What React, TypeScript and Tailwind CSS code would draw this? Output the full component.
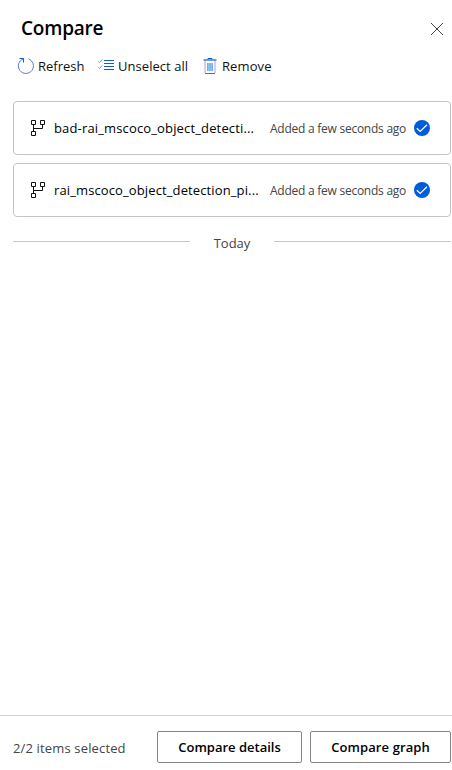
import type { ReactNode } from "react";

function RefreshIcon() {
  return (
    <svg width="18" height="18" viewBox="0 0 18 18" fill="none" stroke="#2f66d0" strokeWidth="1">
      <path d="M11.5 1.9A7.5 7.5 0 1 1 6.3 1.9" stroke="#5578d0" />
      <path d="M2.5 1.5H6.5V5.5" stroke="#0f5bd0" />
    </svg>
  );
}

function UnselectIcon() {
  return (
    <svg width="17" height="14" viewBox="0 0 17 14" fill="none">
      <path d="M6 1.5H16M6 4.5H16M6 7.5H16M6 10.5H16" stroke="#0f5bd0" />
      <path d="M0.3 2.3L1.6 3.5L4.2 0.5M0.3 8.3L1.6 9.5L4.2 6.5" stroke="#7d86cf" strokeWidth="0.9" />
    </svg>
  );
}

function TrashIcon() {
  return (
    <svg width="14" height="16" viewBox="0 0 14 16" fill="none">
      <path d="M5 1.5V0.5H9V1.5" stroke="#0f5bd0" />
      <path d="M2 2.5V15M12 2.5V15" stroke="#a5a4dc" />
      <path d="M0.5 2H13.5" stroke="#0f5bd0" strokeWidth="1.2" />
      <path d="M2 15.5H12" stroke="#3d6fd2" />
      <rect x="4" y="5" width="6" height="8" fill="#8cc4f2" />
      <path d="M4.5 5V13M7 5V13M9.5 5V13" stroke="#74aeea" />
    </svg>
  );
}

function PipelineIcon() {
  return (
    <svg width="16" height="16" viewBox="0 0 16 16" fill="none" stroke="#111" strokeWidth="1">
      <path d="M1.5 0.5H5.5V4.5H1.5ZM10.5 0.5H14.5V4.5H10.5ZM1.5 11.5H5.5V15.5H1.5Z" />
      <path d="M3.5 4.5V11.5M3.5 8.5H12.5V4.5" />
    </svg>
  );
}

function SelectedIcon() {
  return (
    <svg width="16" height="16" viewBox="0 0 16 16" fill="none">
      <circle cx="8" cy="8" r="8" fill="#015cda" />
      <path d="M2.8 8.2L6.2 11.5L13 4.8" stroke="#fff" strokeWidth="1.2" />
    </svg>
  );
}

function Command({ icon, children, className }: { icon: ReactNode; children: ReactNode; className: string }) {
  return (
    <button className={`flex h-5 items-center whitespace-nowrap text-[13px] text-[#111] ${className}`}>
      {icon}
      <span className="pt-0.5">{children}</span>
    </button>
  );
}

function Item({ name, className }: { name: string; className: string }) {
  return (
    <li className="flex h-[54px] items-center rounded border border-[#c4c4c4] pl-4 pr-5">
      <PipelineIcon />
      <span className={`ml-2 w-[216px] whitespace-nowrap pt-0.5 text-[13px] text-black ${className}`}>{name}</span>
      <span className="w-36 whitespace-nowrap pt-0.5 text-[12px] tracking-[-0.25px] text-[#444]">Added a few seconds ago</span>
      <SelectedIcon />
    </li>
  );
}

export default function App() {
  return (
    <main className="flex h-[770px] w-[452px] flex-col overflow-hidden bg-white font-['Open_Sans',sans-serif]">
      <header className="flex h-14 items-center justify-between pl-[21px] pr-[9px]">
        <h1 className="text-[19px] leading-6 font-semibold tracking-[-0.2px] text-black">Compare</h1>
        <svg className="mt-0.5" width="12" height="12" viewBox="0 0 12 12" stroke="#444" strokeWidth="1">
          <path d="M0 0L12 12M12 0L0 12" />
        </svg>
      </header>
      <nav className="flex h-5 pl-[17px]">
        <Command icon={<RefreshIcon />} className="w-[81px] gap-[3px]">Refresh</Command>
        <Command icon={<UnselectIcon />} className="w-[105px] gap-[3px] tracking-[0.05px]">Unselect all</Command>
        <Command icon={<TrashIcon />} className="gap-[5px] tracking-[0.1px]">Remove</Command>
      </nav>
      <ul className="mt-[25px] ml-[13px] mr-px flex flex-col gap-2">
        <Item name="bad-rai_mscoco_object_detecti..." className="tracking-[0.15px]" />
        <Item name="rai_mscoco_object_detection_pi..." className="tracking-[0.12px]" />
      </ul>
      <div className="mt-4 ml-[13px] mr-px flex h-5 items-center text-[13px] text-[#444]">
        <span className="mb-[3px] h-px w-[177px] bg-[#c8c8c8]" />
        <span className="flex-1 pt-0.5 text-center">Today</span>
        <span className="mb-[3px] h-px w-[177px] bg-[#c8c8c8]" />
      </div>
      <footer className="mt-auto flex h-[55px] border-t border-[#d2d2d2] pt-[15px] pl-[13px]">
        <span className="w-36 whitespace-nowrap pt-[7px] text-[13px] leading-5 tracking-[0.15px] text-[#444]">2/2 items selected</span>
        <button className="mr-2 h-8 w-[145px] rounded-xs border border-[#858585] pt-0.5 text-[13px] font-semibold text-black">Compare details</button>
        <button className="h-8 w-[141px] rounded-xs border border-[#858585] pt-0.5 text-[13px] font-semibold tracking-[0.1px] text-black">Compare graph</button>
      </footer>
    </main>
  );
}
